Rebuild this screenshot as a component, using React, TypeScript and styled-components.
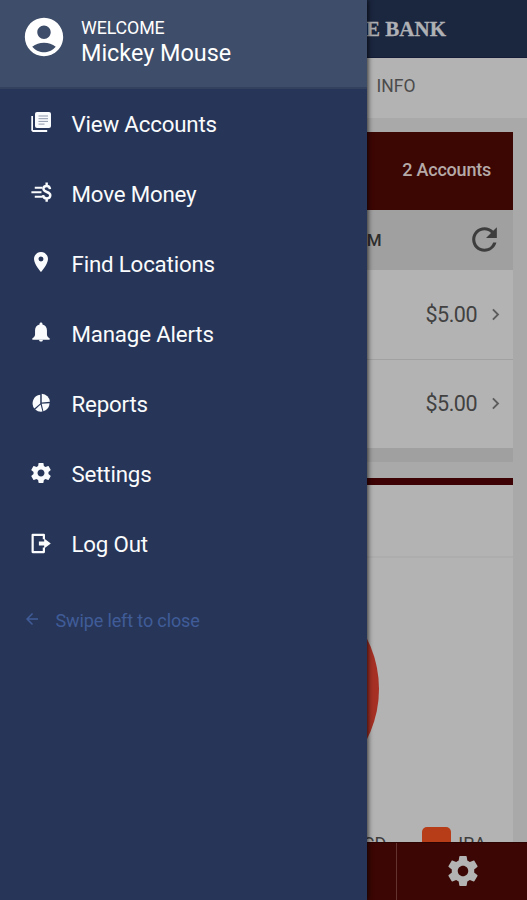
import React from "react";
import styled, { createGlobalStyle } from "styled-components";
import {
  MdAccountCircle,
  MdLocationOn,
  MdRefresh,
  MdChevronRight,
  MdArrowBack,
} from "react-icons/md";

const GlobalStyle = createGlobalStyle`
  * { box-sizing: border-box; }
  body { margin: 0; font-family: Roboto, "Liberation Sans", sans-serif; }
`;

const Screen = styled.div`
  position: relative;
  width: 527px;
  height: 900px;
  overflow: hidden;
  display: flex;
  flex-direction: column;
  background: #a9a9a9;
`;

const TopBar = styled.header`
  flex: none;
  height: 58px;
  padding: 0 81px 0 0;
  display: flex;
  align-items: center;
  justify-content: flex-end;
  background: #1b263f;
  border-bottom: 1px solid #141c38;
  color: #afb1b5;
  font: bold 21px/58px "Liberation Serif", serif;
  -webkit-text-stroke: 0.3px #afb1b5;
  white-space: pre;
`;

const Tabs = styled.nav`
  flex: none;
  height: 60px;
  padding: 0 111.5px 4px 0;
  display: flex;
  align-items: center;
  justify-content: flex-end;
  background: #b3b3b3;
  color: #4b4b4b;
  font-size: 17.5px;
`;

const Content = styled.main`
  flex: 1;
  min-height: 0;
  overflow: hidden;
  padding: 14px 14px 0 0;
  display: flex;
  flex-direction: column;
  gap: 16px;
`;

const AccountsCard = styled.section`
  flex: none;
  display: flex;
  flex-direction: column;
  background: #b3b3b3;
  border-bottom: 14px solid #a0a0a0;
`;

const CardHeader = styled.div`
  height: 78px;
  padding: 0 22px 3px 0;
  display: flex;
  align-items: center;
  justify-content: flex-end;
  background: #3c0603;
  color: #b5aaa8;
  font-size: 18px;
  font-weight: 500;
  letter-spacing: -0.22px;
`;

const RefreshRow = styled.div`
  height: 60px;
  padding: 0 10.5px 0 0;
  display: flex;
  align-items: center;
  justify-content: flex-end;
  gap: 84px;
  background: #a0a0a0;
  color: #2e2e2e;
  font-size: 17px;
  font-weight: 500;
  svg { color: #3d3d3d; margin-top: -2px; }
`;

const AccountRow = styled.div`
  height: 89px;
  padding: 0 6px 0 0;
  display: flex;
  align-items: center;
  justify-content: flex-end;
  gap: 7px;
  color: #414141;
  font-size: 21.5px;
  letter-spacing: -0.5px;
  & + & { border-top: 1px solid #a1a1a1; padding-bottom: 1px; }
  svg { color: #5c5c5c; }
`;

const ChartCard = styled.section`
  flex: none;
  height: 420px;
  display: flex;
  flex-direction: column;
  background: #b3b3b3;
  border-top: 7px solid #3c0204;
`;

const ChartTitle = styled.div`
  height: 73px;
  border-bottom: 2px solid #adadad;
`;

const PieArea = styled.div`
  height: 269px;
  padding: 19px 0 0 155px;
`;

const Legend = styled.div`
  display: flex;
  align-items: flex-start;
  justify-content: flex-end;
  padding-right: 27px;
  color: #3e3e3e;
  font-size: 18px;
  line-height: 34px;
`;

const Swatch = styled.span`
  width: 29px;
  height: 29px;
  margin: 0 7px 0 36px;
  border-radius: 5px;
  background: #b63d17;
`;

const BottomBar = styled.footer`
  flex: none;
  height: 58px;
  display: flex;
  justify-content: flex-end;
  background: #3b0603;
  border-top: 1px solid #2c0402;
`;

const BottomTab = styled.div`
  width: 131px;
  padding: 0 0 2px 1px;
  display: flex;
  align-items: center;
  justify-content: center;
  border-left: 1px solid #64322f;
  color: #b3b3b3;
`;

const Drawer = styled.aside`
  position: absolute;
  top: 0;
  left: 0;
  width: 367px;
  height: 900px;
  display: flex;
  flex-direction: column;
  background: #273658;
  box-shadow: 1px 0 5px rgba(0, 0, 0, 0.75);
`;

const Profile = styled.div`
  height: 88.5px;
  padding: 13.500px 0 0 21px;
  display: flex;
  align-items: flex-start;
  gap: 14px;
  background: #3e4d69;
  border-bottom: 2px solid #33415f;
  color: #fff;
`;

const ProfileText = styled.div`
  display: flex;
  flex-direction: column;
  padding-top: 3.500px;
`;

const Greeting = styled.span`
  font-size: 17.8px;
  line-height: 22px;
  letter-spacing: -0.1px;
`;

const UserName = styled.span`
  font-size: 23.4px;
  line-height: 29px;
`;

const MenuItem = styled.div`
  height: 70.15px;
  padding-left: 28.500px;
  display: flex;
  align-items: center;
  gap: 19px;
  color: #fafbfc;
  font-size: 22.3px;
  letter-spacing: -0.18px;
  line-height: 28px;
  svg { flex: none; margin-bottom: 3px; }
`;

const SwipeHint = styled.div`
  height: 82px;
  padding-left: 23px;
  display: flex;
  align-items: center;
  gap: 14.500px;
  color: #405c98;
  font-size: 18px;
  letter-spacing: -0.13px;
  svg { margin-bottom: 2px; }
`;

const gearPath =
  "M19.43 12.98c.04-.32.07-.64.07-.98s-.03-.66-.07-.98l2.11-1.65c.19-.15.24-.42.12-.64l-2-3.46c-.12-.22-.39-.3-.61-.22l-2.49 1c-.52-.4-1.08-.73-1.69-.98l-.38-2.65C14.46 2.18 14.25 2 14 2h-4c-.25 0-.46.18-.49.42l-.38 2.65c-.61.25-1.17.59-1.69.98l-2.49-1c-.23-.09-.49 0-.61.22l-2 3.46c-.13.22-.07.49.12.64l2.11 1.65c-.04.32-.07.65-.07.98s.03.66.07.98l-2.11 1.65c-.19.15-.24.42-.12.64l2 3.46c.12.22.39.3.61.22l2.49-1c.52.4 1.08.73 1.69.98l.38 2.65c.03.24.24.42.49.42h4c.25 0 .46-.18.49-.42l.38-2.65c.61-.25 1.17-.59 1.69-.98l2.49 1c.23.09.49 0 .61-.22l2-3.46c.12-.22.07-.49-.12-.64l-2.11-1.65zM12 15.5c-1.93 0-3.5-1.57-3.5-3.5s1.57-3.5 3.5-3.5 3.5 1.57 3.5 3.5-1.57 3.5-3.5 3.5z";

const GearIcon = ({ size }: { size: number }) => (
  <svg width={size} height={size} viewBox="0 0 24 24" fill="currentColor">
    <path d={gearPath} />
  </svg>
);

const AccountsIcon = () => (
  <svg width={24} height={24} viewBox="0 0 24 24">
    <path d="M4 6H2.300v14c0 1.100.9 1.900 1.900 1.900h14v-1.900H4V6z" fill="currentColor" />
    <rect x={6} y={2} width={16} height={16} rx={2} fill="currentColor" />
    <path d="M9.500 6h9.500M9.500 8.700h9.500M9.500 11.400h9.500M9.500 14.100h6" stroke="#8d97aa" strokeWidth={1} />
  </svg>
);

const MoveMoneyIcon = () => (
  <svg width={24} height={24} viewBox="0 0 25 25" fill="none" stroke="currentColor">
    <path d="M6 8h8M2.500 12.700h10.500M6 17.400h8" strokeWidth={2} />
    <path
      d="M21.900 9.600c-.2-2.200-1.600-3.400-3.500-3.400-2 0-3.400 1.200-3.400 3 0 4.100 7.200 2.500 7.200 6.800 0 2-1.500 3.200-3.700 3.200s-3.800-1.300-3.900-3.400M18.400 2.700v3.500M18.400 19v3.600"
      strokeWidth={2.500}
    />
  </svg>
);

const BellIcon = () => (
  <svg width={24} height={24} viewBox="0 0 25 25" fill="currentColor">
    <path d="M12.5 2.500c.9 0 1.500.6 1.500 1.500v.6c3 .7 4.700 3 4.700 6v4.500c0 1.600.8 2.700 2.800 4v1.400H3.500v-1.400c2-1.300 2.800-2.400 2.800-4v-4.500c0-3 1.700-5.300 4.700-6V4c0-.9.600-1.500 1.500-1.500z" />
    <path d="M10.500 20.500h4c0 1.300-.9 2-2 2s-2-.7-2-2z" />
  </svg>
);

const ReportsIcon = () => (
  <svg width={24} height={24} viewBox="0 0 25 25" fill="currentColor">
    <path d="M11.700 4v9l-6.100 5.300A8.900 8.900 0 0 1 11.700 4z" />
    <path d="M13.300 2.800a9 9 0 0 1 8.500 8.400l-8.500.8z" />
    <path d="M13.200 13.300l8.200-.5a9 9 0 0 1-6.400 8.300z" />
    <path d="M12.100 14l1.900 7.400a9 9 0 0 1-7.500-2.200z" />
  </svg>
);

const LogOutIcon = () => (
  <svg width={24} height={24} viewBox="0 0 25 25" fill="none" stroke="currentColor">
    <path d="M15.500 8.500V4H3.800v18h11.700v-4.800" strokeWidth={2.300} strokeLinejoin="round" />
    <path d="M10.300 11h5.500V7.800l6.900 5.200-6.900 5.200V15h-5.500z" fill="currentColor" stroke="none" />
  </svg>
);

const menu = [
  { label: "View Accounts", icon: <AccountsIcon /> },
  { label: "Move Money", icon: <MoveMoneyIcon /> },
  { label: "Find Locations", icon: <MdLocationOn size={24} /> },
  { label: "Manage Alerts", icon: <BellIcon /> },
  { label: "Reports", icon: <ReportsIcon /> },
  { label: "Settings", icon: <GearIcon size={24} /> },
  { label: "Log Out", icon: <LogOutIcon /> },
];

const balances = ["$5.00", "$5.00"];

export default function App() {
  return (
    <>
      <GlobalStyle />
      <Screen>
        <TopBar>E BANK</TopBar>
        <Tabs>INFO</Tabs>
        <Content>
          <AccountsCard>
            <CardHeader>2 Accounts</CardHeader>
            <RefreshRow>
              <span>M</span>
              <MdRefresh size={37} />
            </RefreshRow>
            {balances.map((amount, i) => (
              <AccountRow key={i}>
                <span>{amount}</span>
                <MdChevronRight size={23} />
              </AccountRow>
            ))}
          </AccountsCard>
          <ChartCard>
            <ChartTitle />
            <PieArea>
              <svg width={224} height={224} viewBox="0 0 224 224">
                <circle cx={112} cy={112} r={112} fill="#a63024" />
              </svg>
            </PieArea>
            <Legend>
              <span>CD</span>
              <Swatch />
              <span>IRA</span>
            </Legend>
          </ChartCard>
        </Content>
        <BottomBar>
          <BottomTab>
            <GearIcon size={36} />
          </BottomTab>
        </BottomBar>
        <Drawer>
          <Profile>
            <MdAccountCircle size={46} />
            <ProfileText>
              <Greeting>WELCOME</Greeting>
              <UserName>Mickey Mouse</UserName>
            </ProfileText>
          </Profile>
          {menu.map((item) => (
            <MenuItem key={item.label}>
              {item.icon}
              <span>{item.label}</span>
            </MenuItem>
          ))}
          <SwipeHint>
            <MdArrowBack size={18} />
            <span>Swipe left to close</span>
          </SwipeHint>
        </Drawer>
      </Screen>
    </>
  );
}
